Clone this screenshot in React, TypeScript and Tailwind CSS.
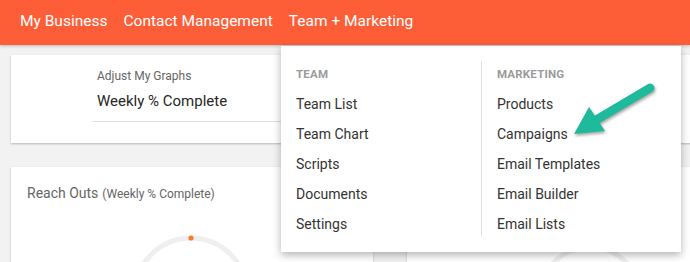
import React from "react";

const font = { fontFamily: "Roboto, 'Noto Sans', Arial, sans-serif" };

export default function App() {
  const team = ["Team List", "Team Chart", "Scripts", "Documents", "Settings"];
  const marketing = ["Products", "Campaigns", "Email Templates", "Email Builder", "Email Lists"];
  return (
    <div className="relative w-[690px] h-[262px] overflow-hidden bg-[#f2f2f2]" style={font}>
      <header className="h-[45px] bg-[#fd5e37] flex items-center pl-[20px] pb-[2px] gap-[16px] text-white text-[15.5px] shadow-[0_1px_3px_rgba(0,0,0,0.25)]">
        <span>My Business</span>
        <span>Contact Management</span>
        <span>Team + Marketing</span>
      </header>

      <div className="pl-[11px] pt-[10px] w-[720px] flex flex-col gap-[24px]">
        <div className="h-[88px] bg-white shadow-[0_1px_2px_rgba(0,0,0,0.25)] pl-[82px] pt-[13px]">
          <div className="pl-[4px] text-[12px] text-[#666] leading-[16px]">Adjust My Graphs</div>
          <div className="pl-[4px] mt-[7px] text-[15px] text-[#262626] leading-[20px]">Weekly % Complete</div>
          <div className="mt-[10px] h-px bg-[#dcdcdc] w-[400px]" />
        </div>
        <div className="flex gap-[34px]">
          <div className="w-[362px] h-[120px] bg-white shadow-[0_1px_2px_rgba(0,0,0,0.25)] pl-[16px] pt-[17px]">
            <div className="text-[#666] leading-[18px]">
              <span className="text-[14px]">Reach Outs</span>{" "}
              <span className="text-[12px]">(Weekly % Complete)</span>
            </div>
            <svg width="140" height="80" className="ml-[100px] mt-[29px]">
              <circle cx="64" cy="62" r="56" fill="none" stroke="#efefef" strokeWidth="5" />
              <circle cx="64" cy="6" r="2.6" fill="#fb7a2a" />
            </svg>
          </div>
          <div className="w-[300px] h-[120px] bg-white shadow-[0_1px_2px_rgba(0,0,0,0.25)]">
            <svg width="200" height="120" className="ml-[120px] mt-[68px]">
              <circle cx="63" cy="62" r="50" fill="none" stroke="#efefef" strokeWidth="5" />
            </svg>
          </div>
        </div>
      </div>

      <div className="absolute left-[281px] top-[46px] w-[400px] h-[206px] bg-white shadow-[0_3px_8px_rgba(0,0,0,0.3)] flex py-[15px]">
        <div className="w-[201px] pl-[15px] pt-[6px] border-r border-[#e2e2e2]">
          <div className="text-[11.5px] font-bold text-[#9a9a9a] leading-[14px] tracking-[0.2px]">TEAM</div>
          <div className="mt-[8px] flex flex-col">
            {team.map((t) => (
              <div key={t} className="h-[30px] leading-[30px] text-[14px] text-[#333]">{t}</div>
            ))}
          </div>
        </div>
        <div className="pl-[15px] pt-[6px]">
          <div className="text-[11.5px] font-bold text-[#9a9a9a] leading-[14px] tracking-[0.2px]">MARKETING</div>
          <div className="mt-[8px] flex flex-col">
            {marketing.map((t) => (
              <div key={t} className="h-[30px] leading-[30px] text-[14px] text-[#333]">{t}</div>
            ))}
          </div>
        </div>
      </div>

      <svg
        className="absolute left-[560px] top-[78px]"
        width="110"
        height="70"
        style={{ filter: "drop-shadow(1px 2px 1.5px rgba(0,0,0,0.35))" }}
      >
        <line x1="90" y1="10" x2="36" y2="42" stroke="#1fb99b" strokeWidth="9" strokeLinecap="round" />
        <polygon points="14,56 29,29 45,53" fill="#1fb99b" />
      </svg>
    </div>
  );
}
